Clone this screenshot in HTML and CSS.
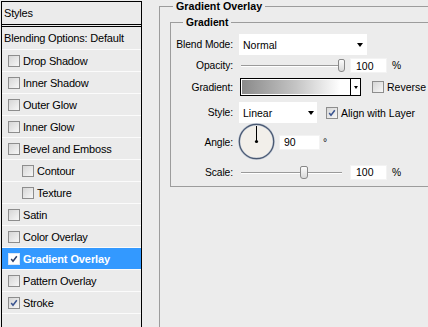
FILE: index.html
```html
<!DOCTYPE html>
<html lang="en">
<head>
  <meta charset="UTF-8" />
  <meta name="viewport" content="width=device-width, initial-scale=1.0" />
  <title>Layer Style</title>
  <link rel="stylesheet" href="styles.css">
</head>
<body>
  <div class="dialog">
    <div class="stylesList">
      <div class="listHead">Styles</div>
      <div class="listRow plain">Blending Options: Default</div>
      <div class="listRow"><span class="check"></span>Drop Shadow</div>
      <div class="listRow"><span class="check"></span>Inner Shadow</div>
      <div class="listRow"><span class="check"></span>Outer Glow</div>
      <div class="listRow"><span class="check"></span>Inner Glow</div>
      <div class="listRow"><span class="check"></span>Bevel and Emboss</div>
      <div class="listRow sub"><span class="check"></span>Contour</div>
      <div class="listRow sub"><span class="check"></span>Texture</div>
      <div class="listRow"><span class="check"></span>Satin</div>
      <div class="listRow"><span class="check"></span>Color Overlay</div>
      <div class="listRow selected">
        <span class="check on"><svg width="8" height="8" viewBox="0 0 8 8"><path d="M1.2 4 L3 6.3 L6.8 1.2" /></svg></span>Gradient Overlay
      </div>
      <div class="listRow"><span class="check"></span>Pattern Overlay</div>
      <div class="listRow">
        <span class="check on"><svg width="8" height="8" viewBox="0 0 8 8"><path d="M1.2 4 L3 6.3 L6.8 1.2" /></svg></span>Stroke
      </div>
    </div>

    <div class="settings">
      <fieldset class="group outer">
        <legend>Gradient Overlay</legend>
        <fieldset class="group inner">
          <legend>Gradient</legend>

          <div class="row blendRow">
            <span class="lbl">Blend Mode:</span>
            <div class="select wide">Normal<span class="arrow"></span></div>
          </div>

          <div class="row opacityRow">
            <span class="lbl">Opacity:</span>
            <div class="slider">
              <span class="rail" style="width: 97px"></span>
              <span class="knob"></span>
            </div>
            <div class="num">100</div>
            <span class="unit">%</span>
          </div>

          <div class="row gradientRow">
            <span class="lbl">Gradient:</span>
            <div class="swatch">
              <span class="ramp"></span>
              <span class="swatchBtn"><span class="arrow small"></span></span>
            </div>
            <span class="check box"></span>
            <span class="opt">Reverse</span>
          </div>

          <div class="row styleRow">
            <span class="lbl">Style:</span>
            <div class="select narrow">Linear<span class="arrow"></span></div>
            <span class="check box on"><svg width="8" height="8" viewBox="0 0 8 8"><path d="M1.2 4 L3 6.3 L6.8 1.2" /></svg></span>
            <span class="opt">Align with Layer</span>
          </div>

          <div class="row angleRow">
            <span class="lbl">Angle:</span>
            <svg class="dial" width="37" height="38" viewBox="0 0 37 38">
              <circle cx="18.5" cy="18.5" r="17.2" fill="#f2efea" stroke="#b9c3d2" stroke-width="2.2" />
              <circle cx="18.5" cy="18.5" r="17.2" fill="none" stroke="#4a5870" stroke-width="1.2" />
              <line x1="18.5" y1="18.5" x2="18.5" y2="3" stroke="#000" stroke-width="1" />
              <circle cx="18.5" cy="18.5" r="1.6" fill="#000" />
            </svg>
            <div class="num angleNum">90</div>
            <span class="deg">°</span>
          </div>

          <div class="row scaleRow">
            <span class="lbl">Scale:</span>
            <div class="slider">
              <span class="rail" style="width: 59px"></span>
              <span class="knob"></span>
              <span class="rail" style="width: 34px"></span>
            </div>
            <div class="num">100</div>
            <span class="unit">%</span>
          </div>
        </fieldset>
      </fieldset>
    </div>
  </div>
</body>
</html>
```

FILE: styles.css
```css
body {
  margin: 0;
  background: #ececec;
  overflow: hidden;
  font-family: "Liberation Sans", Arial, sans-serif;
  font-size: 11px;
  color: #000;
}
.dialog {
  display: flex;
  align-items: flex-start;
  width: 480px;
}

/* left list of layer styles */
.stylesList {
  flex: none;
  width: 139px;
  height: 340px;
  margin: 1px 0 0 1px;
  border: 1px solid #000;
  background: #ebebeb;
  letter-spacing: -0.2px;
}
.listHead {
  height: 22px;
  display: flex;
  align-items: center;
  padding-left: 2px;
  border-bottom: 3px double #000;
}
.listRow {
  height: 21px;
  display: flex;
  align-items: center;
  padding-left: 6px;
  border-bottom: 1px solid #fbfbfb;
}
.listRow.plain {
  height: 22px;
  padding-left: 2px;
}
.listRow.sub {
  padding-left: 20px;
}
.listRow.selected {
  background: #3399ff;
  color: #fff;
  font-weight: bold;
  letter-spacing: -0.1px;
}
.check {
  flex: none;
  width: 10px;
  height: 10px;
  margin-right: 3px;
  border: 1px solid #8d8d8d;
  background: linear-gradient(135deg, #d6d6d6, #f7f7f7);
  display: flex;
  align-items: center;
  justify-content: center;
}
.check svg path {
  fill: none;
  stroke: #3a5490;
  stroke-width: 1.5;
}
.selected .check {
  background: #fff;
  border-color: #dde8f5;
}
.selected .check svg path {
  stroke: #2b3d66;
}

/* right settings */
.settings {
  flex: none;
  width: 300px;
  margin-left: 17px;
}
.group {
  margin: 0;
  border: none;
  border-top: 1px solid #9c9c9c;
  border-left: 1px solid #9c9c9c;
}
.group legend {
  margin-left: 3px;
  padding: 0 3px;
  font-weight: bold;
  font-size: 10.7px;
  line-height: 13px;
}
.outer {
  min-height: 340px;
  padding: 3px 0 0 10px;
}
.inner {
  padding: 5px 0 6px 9px;
  border-bottom: 1px solid #9c9c9c;
}
.inner legend {
  font-size: 10.3px;
}
.row {
  display: flex;
  align-items: center;
  font-size: 10.3px;
}
.lbl {
  flex: none;
  width: 53px;
  margin-right: 6px;
  display: flex;
  justify-content: flex-end;
  white-space: nowrap;
  letter-spacing: -0.1px;
}
.blendRow { height: 21px; }
.opacityRow { height: 17px; margin-top: 2px; }
.gradientRow { height: 18px; margin-top: 4px; }
.styleRow { height: 21px; margin-top: 6px; }
.angleRow { height: 38px; }
.scaleRow { height: 16px; margin-top: 3px; }

.select {
  box-sizing: border-box;
  height: 21px;
  background: #fff;
  display: flex;
  align-items: center;
  justify-content: space-between;
  padding: 0 4px;
  font-size: 10.5px;
}
.select.wide { width: 128px; }
.select.narrow { width: 78px; padding-right: 3px; }
.arrow {
  width: 0;
  height: 0;
  border-left: 3.5px solid transparent;
  border-right: 3.5px solid transparent;
  border-top: 4px solid #000;
}
.arrow.small {
  border-left-width: 2.5px;
  border-right-width: 2.5px;
  border-top-width: 3px;
}

.slider {
  display: flex;
  align-items: center;
  margin-left: 2px;
}
.rail {
  height: 1px;
  background: #9a9a9a;
  box-shadow: 0 1px 0 #fff;
}
.knob {
  box-sizing: border-box;
  width: 7px;
  height: 13px;
  border: 1px solid #888;
  border-radius: 2px 2px 3px 3px;
  background: linear-gradient(#fbfbfb, #d9d9d9);
}
.scaleRow .knob { width: 8px; }

.num {
  box-sizing: border-box;
  width: 37px;
  height: 15px;
  margin-left: 5px;
  padding-left: 5px;
  background: #fff;
  border: 1px solid #f3f3f3;
  display: flex;
  align-items: center;
  font-size: 10.5px;
}
.scaleRow .num { margin-left: 8px; }
.unit { margin-left: 5px; }

.swatch {
  box-sizing: border-box;
  width: 121px;
  height: 18px;
  margin-left: 1px;
  border: 1px solid #000;
  display: flex;
}
.ramp {
  flex: 1;
  border: 1px solid #fff;
  background: linear-gradient(to right, #8a8a8a, #c4c4c4 50%, #fff 92%);
}
.swatchBtn {
  width: 9px;
  border-left: 1px solid #000;
  background: #fff;
  display: flex;
  align-items: center;
  justify-content: center;
}
.check.box {
  width: 10px;
  height: 10px;
  margin-right: 3px;
}
.gradientRow .check.box { margin-left: 11px; }
.styleRow .check.box { margin-left: 9px; }
.opt { font-size: 10.5px; }

.dial {
  flex: none;
  margin-left: -1px;
}
.num.angleNum {
  width: 41px;
  margin-left: 4px;
  padding-left: 4px;
}
.deg { margin-left: 3px; }
```
